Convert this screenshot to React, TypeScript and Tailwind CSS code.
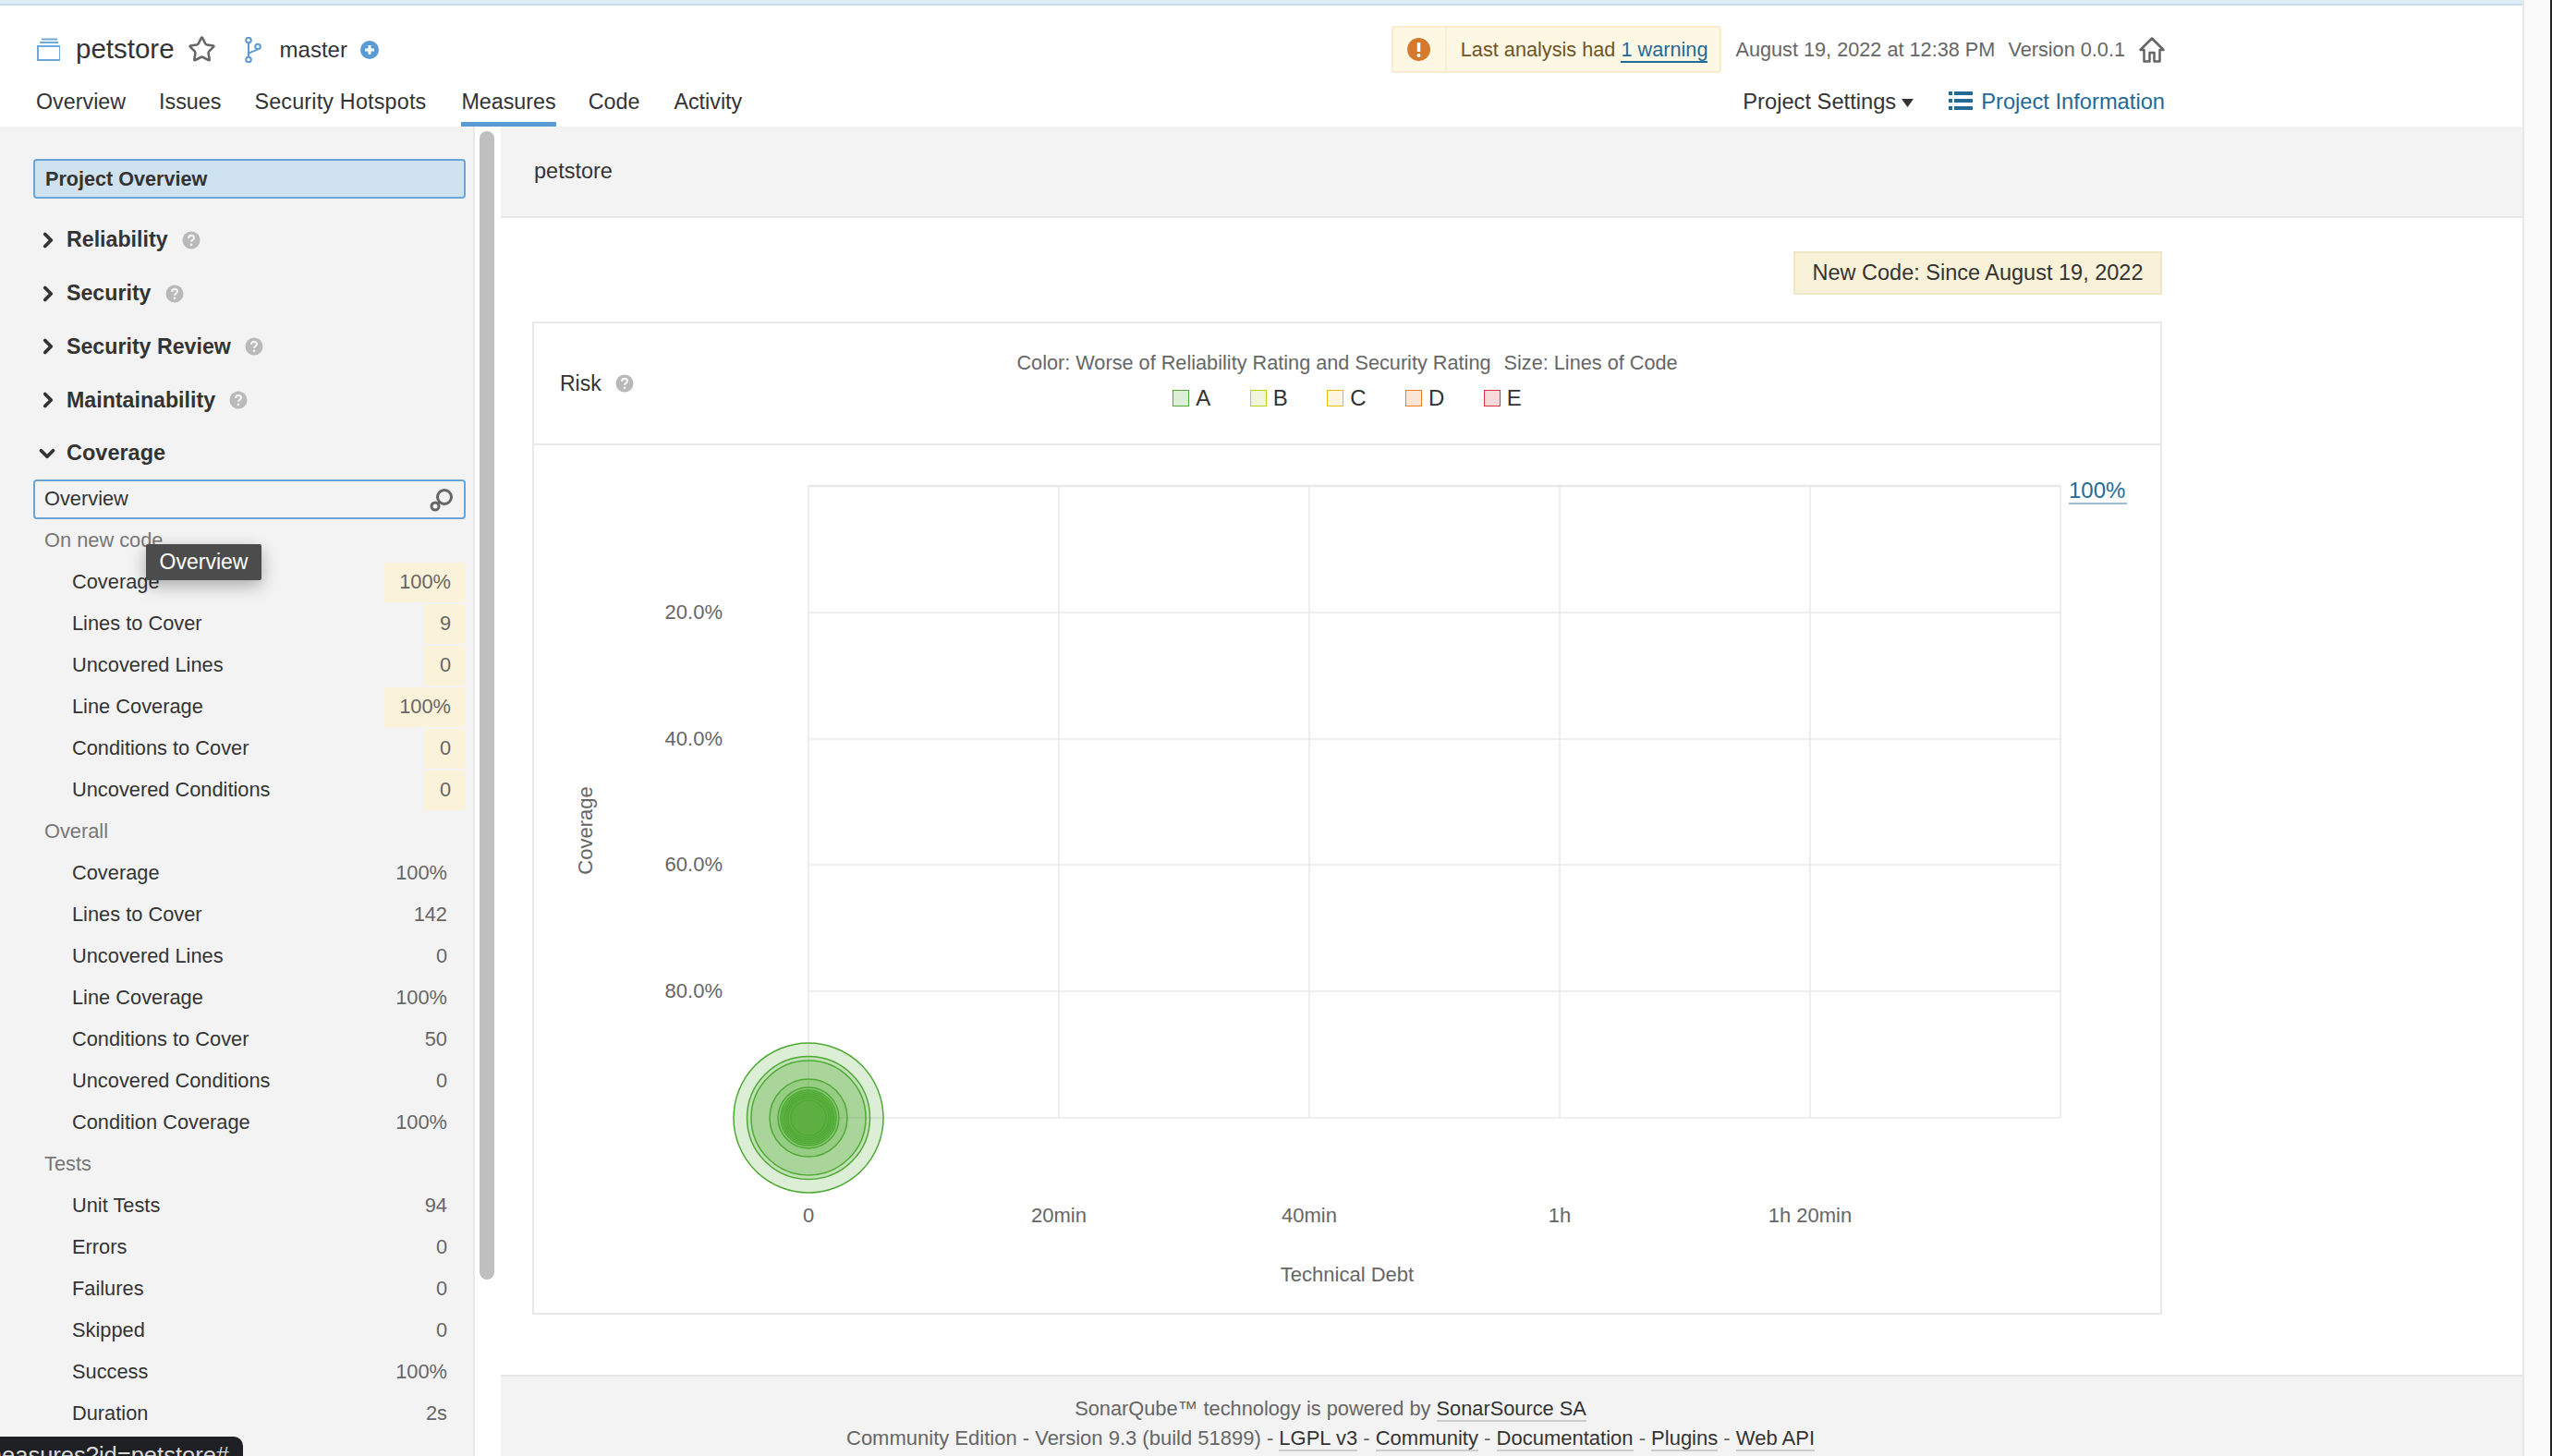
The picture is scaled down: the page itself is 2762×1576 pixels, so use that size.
import { ChevronDown, ChevronRight, Star } from "lucide-react";

const newCode = [
  { label: "Coverage", value: "100%" },
  { label: "Lines to Cover", value: "9" },
  { label: "Uncovered Lines", value: "0" },
  { label: "Line Coverage", value: "100%" },
  { label: "Conditions to Cover", value: "0" },
  { label: "Uncovered Conditions", value: "0" },
];

const overall = [
  { label: "Coverage", value: "100%" },
  { label: "Lines to Cover", value: "142" },
  { label: "Uncovered Lines", value: "0" },
  { label: "Line Coverage", value: "100%" },
  { label: "Conditions to Cover", value: "50" },
  { label: "Uncovered Conditions", value: "0" },
  { label: "Condition Coverage", value: "100%" },
];

const tests = [
  { label: "Unit Tests", value: "94" },
  { label: "Errors", value: "0" },
  { label: "Failures", value: "0" },
  { label: "Skipped", value: "0" },
  { label: "Success", value: "100%" },
  { label: "Duration", value: "2s" },
];

const legend = [
  { label: "A", box: "bg-[#dfeedb] border-[#4eaa33]" },
  { label: "B", box: "bg-[#f0f5dc] border-[#b0d513]" },
  { label: "C", box: "bg-[#fdf5dd] border-[#eabe06]" },
  { label: "D", box: "bg-[#fbe6d6] border-[#ed7d20]" },
  { label: "E", box: "bg-[#f5dadb] border-[#d4333f]" },
];

const bubbles = [81, 66.5, 62, 42, 33, 30, 28, 26, 24, 22, 19];
const gridX = [875, 1146, 1417, 1688, 1959, 2230];
const gridY = [526, 663, 800, 936, 1073, 1210];
const xTicks = [
  { x: 875, label: "0" },
  { x: 1146, label: "20min" },
  { x: 1417, label: "40min" },
  { x: 1688, label: "1h" },
  { x: 1959, label: "1h 20min" },
];
const yTicks = [
  { y: 663, label: "20.0%" },
  { y: 800, label: "40.0%" },
  { y: 936, label: "60.0%" },
  { y: 1073, label: "80.0%" },
];

function HelpIcon({ className }: { className?: string }) {
  return (
    <svg viewBox="0 0 20 20" className={`h-[20px] w-[20px] ${className ?? ""}`}>
      <circle cx="10" cy="10" r="9.5" fill="#b9b9b9" />
      <path d="M7 8c0-4 6-4 6-.6 0 2.200-3 2.200-3 4.300" fill="none" stroke="#f3f3f3" strokeWidth="2.200" />
      <circle cx="10" cy="14.800" r="1.400" fill="#f3f3f3" />
    </svg>
  );
}

function Domain({ name }: { name: string }) {
  return (
    <div className="flex h-[57.75px] items-center">
      <ChevronRight className="ml-[3px] h-[26px] w-[26px] text-[#333]" strokeWidth={3.5} />
      <span className="ml-[7px] text-[23.2px] font-bold text-[#333]">{name}</span>
      <HelpIcon className="ml-[15px]" />
    </div>
  );
}

function Measure({ label, value, leak }: { label: string; value: string; leak?: boolean }) {
  return (
    <div className="flex h-[45px] items-center justify-between pl-[42px]">
      <span className="text-[21.8px] text-[#333]">{label}</span>
      {leak ? (
        <span className="flex h-[43px] items-center rounded-[3px] bg-[#fbf3d9] pl-[17px] pr-[16px] text-[21.8px] text-[#666]">
          {value}
        </span>
      ) : (
        <span className="flex h-[43px] items-center pr-[20px] text-[21.8px] text-[#666]">{value}</span>
      )}
    </div>
  );
}

function GroupTitle({ children }: { children: string }) {
  return <div className="flex h-[45px] items-center pl-[12px] text-[21.8px] text-[#777]">{children}</div>;
}

function FooterLink({ children }: { children: string }) {
  return <a className="border-b-2 border-[#ccc] text-[#333]">{children}</a>;
}

function Sidebar() {
  return (
    <aside className="flex w-[542px] shrink-0">
      <div className="h-full w-[514px] border-r-2 border-[#e8e8e8] bg-[#f3f3f3] pl-[36px] pr-[8px] pt-[35px]">
        <div className="flex h-[43px] items-center rounded-[4px] border-2 border-[#6aa5d8] bg-[#cfe2f0] pl-[11px] pt-[1px] text-[21.6px] font-bold text-[#333]">
          Project Overview
        </div>
        <div className="mt-[16px]">
          <Domain name="Reliability" />
          <Domain name="Security" />
          <Domain name="Security Review" />
          <Domain name="Maintainability" />
          <div className="flex h-[57.75px] items-center">
            <ChevronDown className="ml-[2px] h-[26px] w-[26px] text-[#333]" strokeWidth={3.5} />
            <span className="ml-[8px] text-[23.5px] font-bold text-[#333]">Coverage</span>
          </div>
        </div>
        <div className="-mt-[1px] flex h-[43px] items-center justify-between rounded-[4px] border-2 border-[#6aa5d8] pl-[10px] pr-[11px] pt-[1px] text-[21.8px] text-[#333]">
          Overview
          <svg viewBox="0 0 26 26" className="h-[26px] w-[26px]" fill="none" stroke="#666" strokeWidth="3">
            <circle cx="16" cy="10" r="7.500" />
            <circle cx="6" cy="20" r="4" />
            <path d="M10.500 15.500 8.500 17.500" />
          </svg>
        </div>
        <div className="mt-[1.5px]">
          <GroupTitle>On new code</GroupTitle>
          {newCode.map((m) => (
            <Measure key={m.label} label={m.label} value={m.value} leak />
          ))}
          <GroupTitle>Overall</GroupTitle>
          {overall.map((m) => (
            <Measure key={m.label} label={m.label} value={m.value} />
          ))}
          <GroupTitle>Tests</GroupTitle>
          {tests.map((m) => (
            <Measure key={m.label} label={m.label} value={m.value} />
          ))}
        </div>
      </div>
      <div className="h-full w-[28px] pl-[5px] pt-[5px]">
        <div className="h-[1243px] w-[16px] rounded-full bg-[#bfbfbf]" />
      </div>
    </aside>
  );
}

function RiskChart() {
  return (
    <svg viewBox="578 482 1760 939" className="block h-[939px] w-[1760px]" fontSize="22" fill="#666">
      {gridX.map((x) => (
        <line key={x} x1={x} x2={x} y1={526} y2={1210} stroke="#e8e8e8" strokeWidth="1.500" />
      ))}
      {gridY.map((y) => (
        <line key={y} x1={875} x2={2230} y1={y} y2={y} stroke="#e8e8e8" strokeWidth={y === 526 ? 2.5 : 1.5} />
      ))}
      {yTicks.map((t) => (
        <text key={t.y} x={782} y={t.y + 7} textAnchor="end">
          {t.label}
        </text>
      ))}
      {xTicks.map((t) => (
        <text key={t.x} x={t.x} y={1323} textAnchor="middle">
          {t.label}
        </text>
      ))}
      <text x={1458} y={1387} textAnchor="middle">
        Technical Debt
      </text>
      <text transform="translate(641 899) rotate(-90)" textAnchor="middle">
        Coverage
      </text>
      <text x={2239} y={539} fontSize="24" fill="#236a97">
        100%
      </text>
      <line x1={2239} x2={2302} y1={545} y2={545} stroke="#9dbdd3" strokeWidth="2" />
      {bubbles.map((r) => (
        <circle key={r} cx={875} cy={1210} r={r} fill="#4eaa33" fillOpacity="0.2" stroke="#4eaa33" strokeWidth="1.500" />
      ))}
    </svg>
  );
}

export default function App() {
  return (
    <div className="relative flex h-[1576px] w-[2762px] overflow-hidden bg-[#fafafa] font-['Liberation_Sans',Arial,sans-serif] text-[#333]">
      <div className="flex h-full w-[2730px] shrink-0 flex-col bg-white">
        <div className="h-[6px] shrink-0 border-b-2 border-[#c5dcee] bg-[#deecf6]" />

        <header className="shrink-0 pl-[39px] pr-[387px]">
          <div className="mt-[22px] flex h-[51px] items-center">
            <svg viewBox="0 0 26 25" className="h-[25px] w-[26px]" fill="none" stroke="#6ea8d8" strokeWidth="2">
              <rect x="2" y="9" width="24" height="15" />
              <path d="M4 5h20M6 1.500h17" />
            </svg>
            <span className="ml-[17px] text-[29.5px] text-[#333]">petstore</span>
            <Star className="ml-[14px] h-[31px] w-[31px] text-[#666]" strokeWidth={2} />
            <svg viewBox="0 0 20 28" className="ml-[30px] h-[28px] w-[20px]" fill="none" stroke="#5b9bd5" strokeWidth="2">
              <circle cx="5" cy="3.500" r="2.800" />
              <circle cx="5" cy="24.500" r="2.800" />
              <circle cx="15" cy="10.500" r="2.800" />
              <path d="M5 6.500V21.500M5 19c0-3.500 9-3.500 10-6" />
            </svg>
            <span className="ml-[19px] text-[24px]">master</span>
            <svg viewBox="0 0 20 20" className="ml-[14px] h-[20px] w-[20px]">
              <circle cx="10" cy="10" r="10" fill="#5b9bd5" />
              <path d="M10 5v10M5 10h10" stroke="#fff" strokeWidth="3" />
            </svg>

            <div className="ml-auto flex h-[51px] items-center rounded-[3px] border-2 border-[#faebcc] bg-[#fcf8e3] text-[21.7px] text-[#6f5424]">
              <div className="flex h-full w-[58px] items-center justify-center border-r-2 border-[#f6efd6]">
                <svg viewBox="0 0 25 25" className="h-[25px] w-[25px]">
                  <circle cx="12.500" cy="12.500" r="12.500" fill="#d4792d" />
                  <path d="M12.500 5v10" stroke="#fff" strokeWidth="3.500" />
                  <circle cx="12.500" cy="19" r="2" fill="#fff" />
                </svg>
              </div>
              <span className="ml-[15px] mr-[13px] pt-[1px]">
                Last analysis had <a className="border-b-2 border-[#236a97] text-[#236a97]">1 warning</a>
              </span>
            </div>
            <span className="ml-[15px] pt-[1px] text-[21.7px] text-[#666]">August 19, 2022 at 12:38 PM</span>
            <span className="ml-[14px] pt-[1px] text-[21.7px] text-[#666]">Version 0.0.1</span>
            <svg viewBox="0 0 28 28" className="ml-[15px] h-[28px] w-[28px]" fill="none" stroke="#666" strokeWidth="2.500">
              <path d="M1.500 14 14 1.500 26.500 14H22.500V26.500H16.500V17H11.500V26.500H5.500V14Z" strokeLinejoin="round" />
            </svg>
          </div>

          <nav className="mt-[5px] flex h-[53px] items-center text-[23.3px] text-[#333]">
            <a className="flex h-full items-center border-b-[5px] border-transparent pt-[5px]">Overview</a>
            <a className="ml-[36px] flex h-full items-center border-b-[5px] border-transparent pt-[5px]">Issues</a>
            <a className="ml-[36px] flex h-full items-center border-b-[5px] border-transparent pt-[5px] tracking-[0.2px]">Security Hotspots</a>
            <a className="ml-[38px] flex h-full items-center border-b-[5px] border-[#5b9bd5] pt-[5px]">Measures</a>
            <a className="ml-[35px] flex h-full items-center border-b-[5px] border-transparent pt-[5px]">Code</a>
            <a className="ml-[37px] flex h-full items-center border-b-[5px] border-transparent pt-[5px]">Activity</a>
            <a className="ml-auto flex h-full items-center border-b-[5px] border-transparent pt-[5px] text-[23.7px]">Project Settings</a>
            <svg viewBox="0 0 13 9" className="ml-[6px] mt-[2px] h-[9px] w-[13px]">
              <path d="M0 0h13L6.500 9Z" fill="#333" />
            </svg>
            <svg viewBox="0 0 26 21" className="ml-[38px] mt-[-2px] h-[21px] w-[26px]" fill="#236a97">
              <path d="M0 0h4v4H0zM6 0h20v4H6zM0 8h4v4H0zM6 8h20v4H6zM0 16h4v4H0zM6 16h20v4H6z" />
            </svg>
            <a className="ml-[9px] flex h-full items-center border-b-[5px] border-transparent pt-[5px] text-[23.7px] text-[#236a97]">
              Project Information
            </a>
          </nav>
        </header>

        <div className="flex min-h-0 flex-1">
          <Sidebar />
          <main className="flex min-w-0 flex-1 flex-col">
            <div className="flex h-[99px] shrink-0 items-center border-b-2 border-[#e6e6e6] bg-[#f3f3f3] pl-[36px] pt-[1px] text-[23.5px]">
              petstore
            </div>
            <div className="w-[1798px] shrink-0 pl-[34px]">
              <div className="ml-auto mt-[36px] flex h-[47px] w-[399px] items-center justify-center border-2 border-[#efe7c8] bg-[#f9f2d8] text-[23.5px]">
                New Code: Since August 19, 2022
              </div>
              <section className="mt-[29px] h-[1075px] border-2 border-[#e8e8e8]">
                <div className="grid h-[132px] grid-cols-[1fr_auto_1fr] items-center border-b-2 border-[#e8e8e8]">
                  <div className="flex items-center pl-[28px] text-[23px]">
                    Risk
                    <HelpIcon className="ml-[15px]" />
                  </div>
                  <div className="mb-[4px] flex flex-col items-center">
                    <div className="text-[21.7px] text-[#666]">
                      Color: Worse of Reliability Rating and Security Rating<span className="ml-[14px]">Size: Lines of Code</span>
                    </div>
                    <div className="mt-[4px] flex gap-[42.5px] text-[24px]">
                      {legend.map((l) => (
                        <div key={l.label} className="flex items-center">
                          <span className={`mr-[7px] h-[18px] w-[18px] border-[1.5px] ${l.box}`} />
                          {l.label}
                        </div>
                      ))}
                    </div>
                  </div>
                </div>
                <RiskChart />
              </section>
            </div>
            <footer className="mt-[65px] flex-1 border-t-2 border-[#e6e6e6] bg-[#f3f3f3] pt-[19px]">
              <div className="w-[1796px] text-center text-[22px] leading-[32px] text-[#666]">
                <div className="text-[21.8px]">
                  SonarQube™ technology is powered by <FooterLink>SonarSource SA</FooterLink>
                </div>
                <div>
                  Community Edition - Version 9.3 (build 51899) - <FooterLink>LGPL v3</FooterLink> - <FooterLink>Community</FooterLink> -{" "}
                  <FooterLink>Documentation</FooterLink> - <FooterLink>Plugins</FooterLink> - <FooterLink>Web API</FooterLink>
                </div>
              </div>
            </footer>
          </main>
        </div>
      </div>

      <div className="h-full w-[2px] shrink-0 bg-[#e8e8e8]" />
      <div className="flex-1" />
      <div className="h-full w-[2px] shrink-0 bg-[#222]" />

      {/* hover tooltip over the measure list */}
      <div className="absolute left-[158px] top-[589px] flex h-[39px] w-[125px] items-center justify-center rounded-[2px] bg-[#4c4c4c] text-[23px] text-white shadow-[0_6px_18px_rgba(0,0,0,0.3)]">
        Overview
      </div>

      {/* browser status bubble, cut off by the window */}
      <div className="absolute bottom-0 left-0 flex h-[21px] w-[263px] justify-end overflow-hidden rounded-tr-[10px] bg-[#1f2024] pr-[15px] pt-[6px] text-[25.5px] leading-[28px] whitespace-nowrap text-[#d8d8d8]">
        measures?id=petstore#
      </div>
    </div>
  );
}
